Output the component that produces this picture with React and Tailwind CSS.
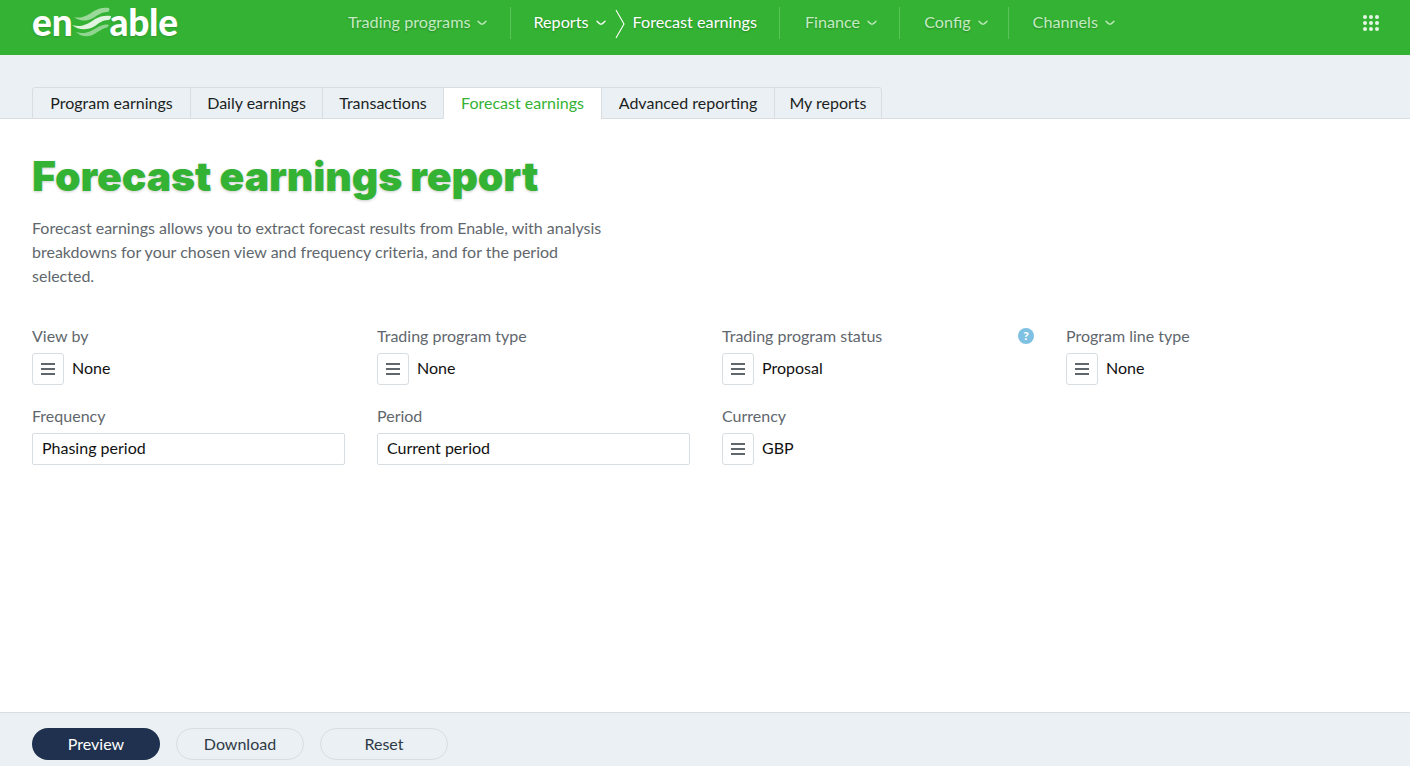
import React from 'react';

const font = 'font-["Lato","Noto_Sans",sans-serif]';

const Logo = () => (
  <div className="flex items-center text-white font-black text-[37px] leading-none tracking-[-0.2px] [text-shadow:0_1px_2px_rgba(0,0,0,0.15)]">
    <span>en</span>
    <svg width="40" height="32" viewBox="0 0 40 32" fill="none" className="-ml-[1px] -mr-[2px]">
      <path d="M3 11C11 13 17 9 23 5C28 2 33 1 38 2C39 4 38 6 36 6C31 6 27 9 22 12C15 16 8 15 3 11Z" fill="#fff" fillOpacity="0.5" />
      <path d="M1 19C10 22 17 18 24 13C29 10 35 9 40 10C40 12 39 14 37 14C32 14 28 17 24 20C16 25 7 24 1 19Z" fill="#fff" fillOpacity="0.85" />
      <path d="M5 26C14 29 20 25 27 21C31 19 35 18 38 19C37 21 36 22 34 22C31 23 28 25 25 27C18 32 10 31 5 26Z" fill="#fff" fillOpacity="0.45" />
    </svg>
    <span>able</span>
  </div>
);

const Caret = () => (
  <svg width="10" height="6" viewBox="0 0 10 6" fill="none" stroke="currentColor" strokeWidth="1.3" strokeLinecap="round" className="mt-[1px]">
    <path d="M1 1.2C3 3.2 4 4.2 5 4.2C6 4.2 7 3.2 9 1.2" />
  </svg>
);

const NavItem = ({ label, dim }) => (
  <div className={`flex items-center gap-[7px] ${dim ? 'text-[#c3ebc1]' : 'text-white'}`}>
    <span>{label}</span>
    <Caret />
  </div>
);

const Sep = ({ className }) => <div className={`h-[32px] w-px bg-[#5cc25b] ${className || ''}`} />;

const AppsIcon = () => (
  <div className="grid grid-cols-3 gap-[2px]">
    {[...Array(9)].map((_, i) => (
      <div key={i} className="h-[4px] w-[4px] rounded-full bg-[#e6f5e5]" />
    ))}
  </div>
);

const Tab = ({ label, active, className }) => (
  <div
    className={`flex h-[32px] items-center justify-center border border-[#d8dde1] text-[16px] -ml-px first:ml-0 first:rounded-tl-[3px] last:rounded-tr-[3px] ${
      active ? 'border-b-white bg-white text-[#34b233]' : 'bg-[#ebf0f4] text-[#1b1f23]'
    } ${className}`}
  >
    {label}
  </div>
);

const Picker = ({ label, value, hint }) => (
  <div className="relative">
    <div className="mb-[7px] text-[16px] leading-[20px] text-[#5f676d]">{label}</div>
    <div className="flex items-center gap-[8px]">
      <div className="flex h-[32px] w-[32px] flex-col items-center justify-center gap-[3px] rounded-[3px] border border-[#d8dde1] bg-white">
        <div className="h-[2px] w-[14px] bg-[#5f676d]" />
        <div className="h-[2px] w-[14px] bg-[#5f676d]" />
        <div className="h-[2px] w-[14px] bg-[#5f676d]" />
      </div>
      <span className="pb-[2px] text-[16px] text-[#111]">{value}</span>
    </div>
    {hint && (
      <div className="absolute right-0 top-[2px] flex h-[16px] w-[16px] items-center justify-center rounded-full bg-[#7fc1e3] text-[12px] font-black leading-none text-white">
        ?
      </div>
    )}
  </div>
);

const TextField = ({ label, value }) => (
  <div>
    <div className="mb-[7px] text-[16px] leading-[20px] text-[#5f676d]">{label}</div>
    <div className="flex h-[32px] items-center rounded-[2px] border border-[#d8dde1] bg-white px-[9px] pb-[2px] text-[16px] text-[#111]">
      {value}
    </div>
  </div>
);

const Btn = ({ children, primary }) => (
  <button
    className={`h-[32px] w-[128px] rounded-full text-[16px] ${
      primary ? 'bg-[#20314f] text-white' : 'border border-[#d8dde1] text-[#2e3a45]'
    }`}
  >
    {children}
  </button>
);

export default function App() {
  return (
    <div className={`flex h-screen flex-col overflow-hidden bg-white ${font}`}>
      <header className="flex h-[55px] shrink-0 items-start bg-[#34b233] pl-[32px] pr-[31px] text-[16.2px] [text-shadow:0_1px_2px_rgba(0,0,0,0.25)]">
        <div className="flex h-[43px] w-[316px] items-center">
          <Logo />
        </div>
        <nav className="flex h-[45px] items-center">
          <NavItem label="Trading programs" dim />
          <Sep className="ml-[23px] mr-[22px]" />
          <NavItem label="Reports" />
          <svg width="10" height="30" viewBox="0 0 10 30" fill="none" stroke="#fff" strokeWidth="1.1" className="ml-[9px] mr-[8px] mt-[2px]">
            <path d="M1 1L9 15L1 29" />
          </svg>
          <span className="text-white">Forecast earnings</span>
          <Sep className="ml-[22px] mr-[25px]" />
          <NavItem label="Finance" dim />
          <Sep className="ml-[22px] mr-[24px]" />
          <NavItem label="Config" dim />
          <Sep className="ml-[20px] mr-[24px]" />
          <NavItem label="Channels" dim />
        </nav>
        <div className="ml-auto flex h-[45px] items-center">
          <AppsIcon />
        </div>
      </header>

      <div className="flex h-[64px] shrink-0 items-end border-b border-[#d8dde1] bg-[#ebf0f4] pl-[32px]">
        <div className="-mb-px flex">
          <Tab label="Program earnings" className="w-[159px]" />
          <Tab label="Daily earnings" className="w-[133px]" />
          <Tab label="Transactions" className="w-[122px]" />
          <Tab label="Forecast earnings" active className="w-[159px] text-[16.5px]" />
          <Tab label="Advanced reporting" className="w-[174px]" />
          <Tab label="My reports" className="w-[108px]" />
        </div>
      </div>

      <main className="flex-1 px-[32px] pt-[32px]">
        <h1 className="font-['Inter'] text-[41px] font-black leading-[50px] tracking-[-0.1px] text-[#34b233] [text-shadow:0_1px_3px_rgba(0,0,0,0.2)]">
          Forecast earnings report
        </h1>
        <p className="mt-[15px] w-[590px] text-[16px] leading-[24px] text-[#5f676d]">
          Forecast earnings allows you to extract forecast results from Enable, with analysis breakdowns for your chosen view and frequency criteria, and for the period selected.
        </p>
        <div className="mt-[38px] grid grid-cols-[313px_313px_312px_1fr] gap-x-[32px] gap-y-[21px]">
          <Picker label="View by" value="None" />
          <Picker label="Trading program type" value="None" />
          <Picker label="Trading program status" value="Proposal" hint />
          <Picker label="Program line type" value="None" />
          <TextField label="Frequency" value="Phasing period" />
          <TextField label="Period" value="Current period" />
          <Picker label="Currency" value="GBP" />
        </div>
      </main>

      <footer className="flex h-[54px] shrink-0 gap-[16px] border-t border-[#d8dde1] bg-[#ebf0f4] pl-[32px] pt-[15px]">
        <Btn primary>Preview</Btn>
        <Btn>Download</Btn>
        <Btn>Reset</Btn>
      </footer>
    </div>
  );
}
